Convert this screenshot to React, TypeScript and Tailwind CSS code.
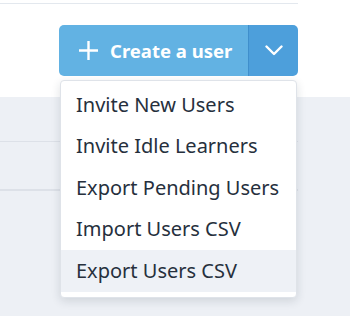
import { useState } from "react";

const items = [
  "Invite New Users",
  "Invite Idle Learners",
  "Export Pending Users",
  "Import Users CSV",
  "Export Users CSV",
];

const App = () => {
  const [hovered] = useState(4);

  return (
    <div className="relative h-[316px] w-[350px] overflow-hidden bg-white font-['Noto_Sans',sans-serif]">
      <div className="h-[97px] bg-white pt-[3px]">
        <div className="h-px w-[298px] bg-[#e3e8ee]" />
      </div>
      <div className="h-[219px] bg-[#edf0f5]">
        <div className="h-[44px]" />
        <div className="h-px w-[298px] bg-[#dde1e8]" />
        <div className="h-[47px]" />
        <div className="h-[2px] w-[298px] bg-[#dde1e8]" />
      </div>

      <div className="absolute left-[59px] top-[25px] w-[239px]">
        <div className="flex h-[51px] overflow-hidden rounded-[5px] text-white">
          <button className="flex flex-1 items-center gap-[11px] bg-[#62b2e3] pl-[19px]">
            <svg width="21" height="21" viewBox="0 0 21 21" fill="none" stroke="white" strokeWidth="2.4">
              <path d="M10.5 1v19M1 10.5h19" />
            </svg>
            <span className="text-[18.5px] font-bold">Create a user</span>
          </button>
          <button className="flex w-[50px] items-center justify-center border-l border-[#3f8fcc] bg-[#4d9fdb]">
            <svg width="18" height="11" viewBox="0 0 18 11" fill="none" stroke="white" strokeWidth="2.4" strokeLinecap="round" strokeLinejoin="round">
              <path d="M1.5 1.5l7.5 7.5 7.5-7.5" />
            </svg>
          </button>
        </div>

        <div className="mt-[4px] ml-px w-[237px] overflow-hidden rounded-[4px] border border-[#dfe3e9] bg-white pt-[3px] pb-[5px] shadow-[0_3px_10px_rgba(30,40,60,0.14)]">
          {items.map((label, i) => (
            <div
              key={label}
              className={`flex h-[41.5px] items-center pl-[15px] text-[20px] text-[#26303d] ${i === hovered ? "bg-[#eef1f6]" : ""}`}
            >
              {label}
            </div>
          ))}
        </div>
      </div>
    </div>
  );
};

export default App;
